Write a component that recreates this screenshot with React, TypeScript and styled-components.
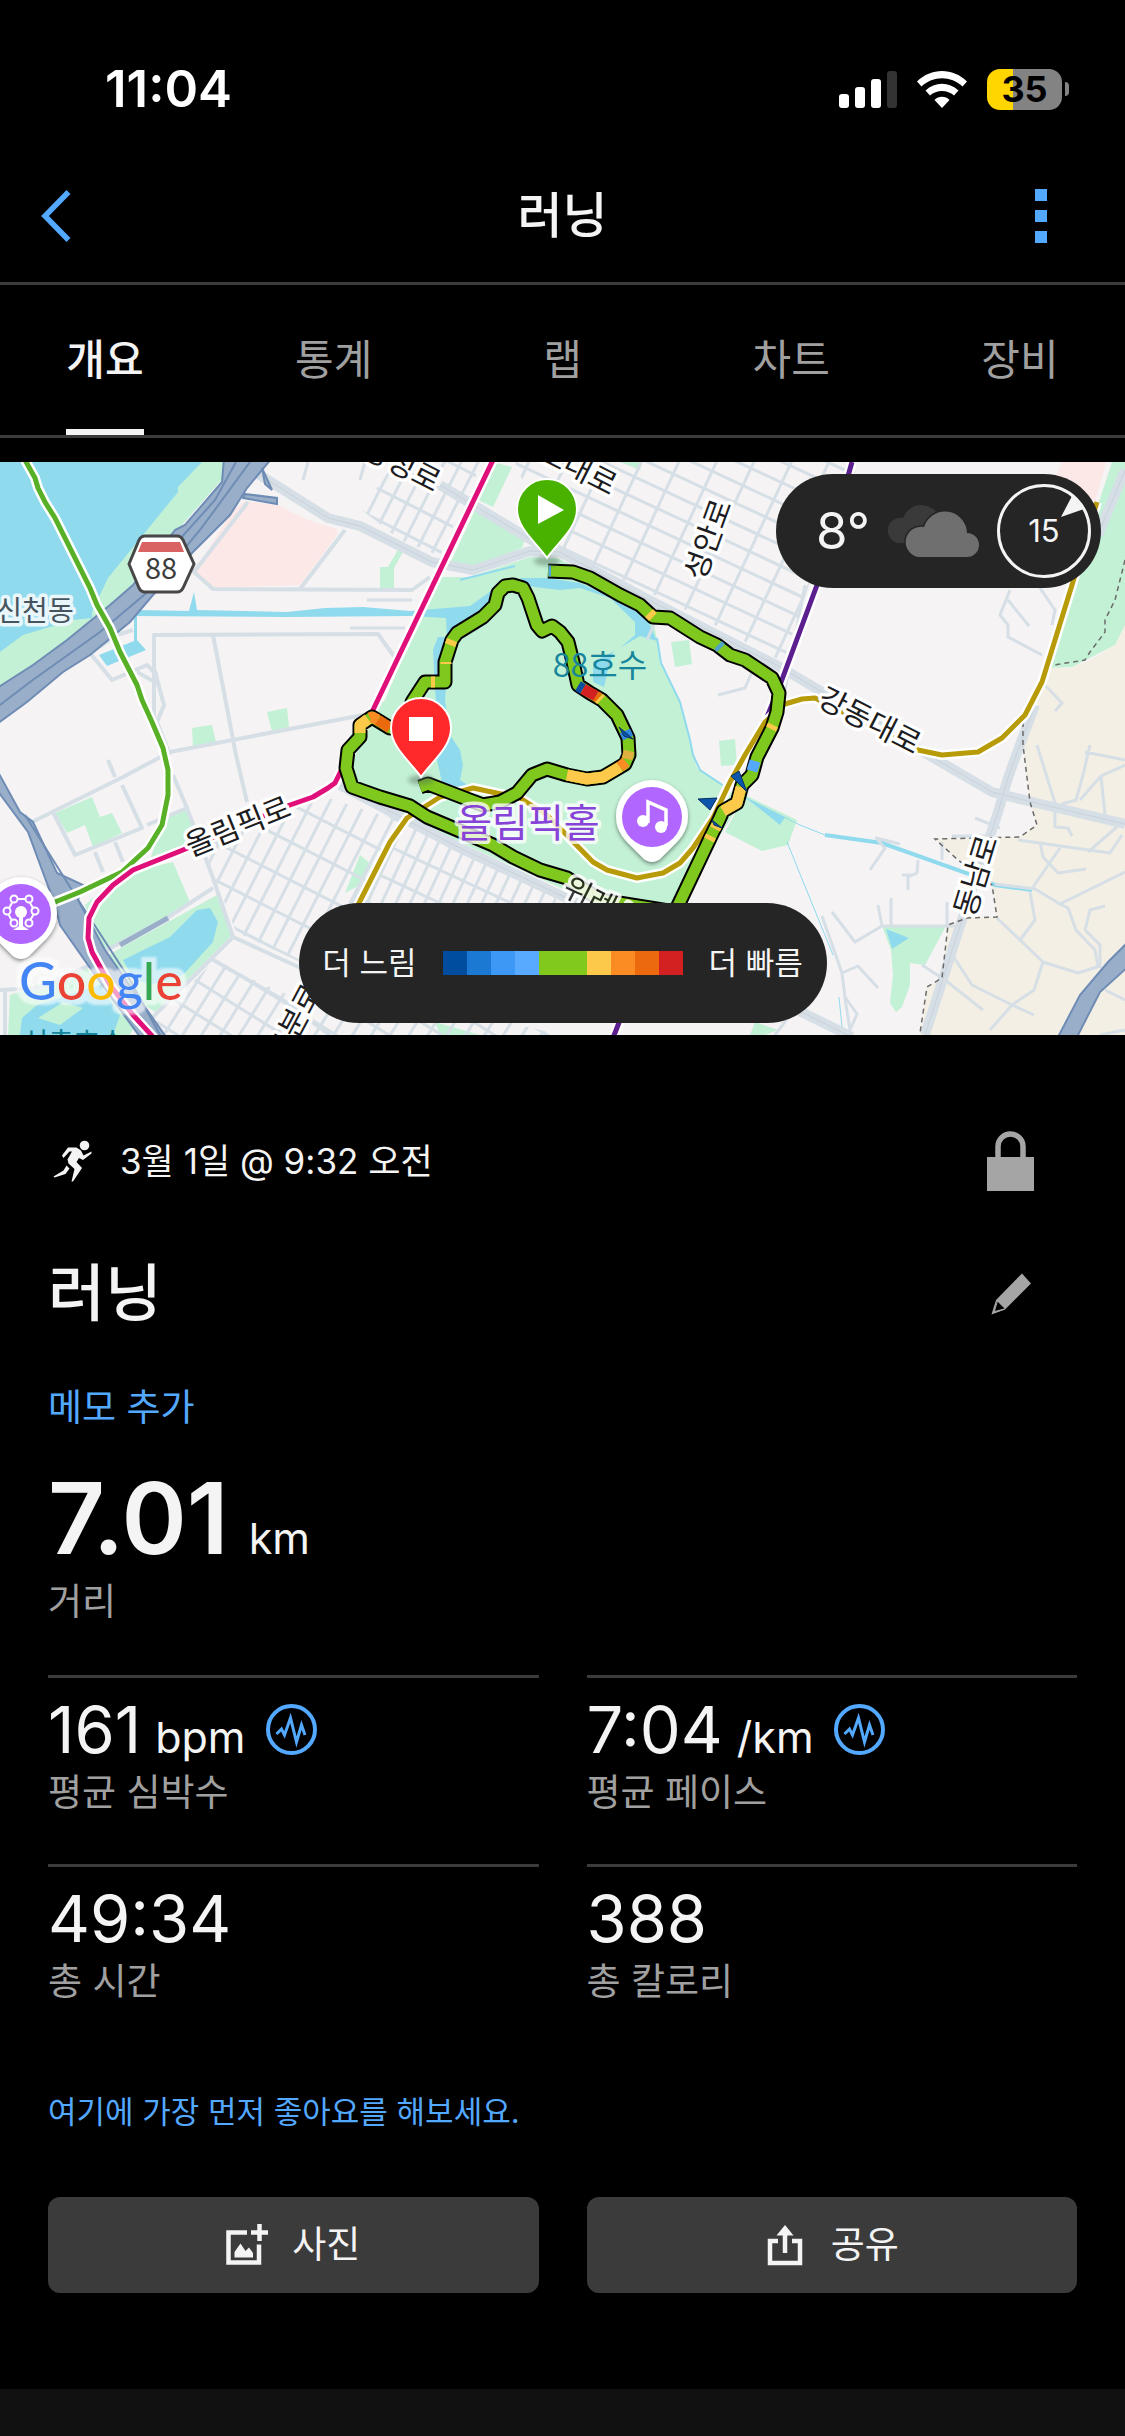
import React from 'react';
import styled, { createGlobalStyle, css } from 'styled-components';

const colors = {
  text: '#f4f4f4',
  muted: '#a0a0a0',
  accent: '#53a8ff',
  line: '#3b3b3b',
  pill: '#252525',
};

const GlobalStyle = createGlobalStyle`
  *, *::before, *::after { box-sizing: border-box; }
  html, body { margin: 0; background: #000; }
  body, button {
    font-family: Inter, 'Noto Sans CJK KR', sans-serif;
    color: ${colors.text};
  }
  button { margin: 0; padding: 0; border: 0; background: none; cursor: pointer; }
  p, h1, h2, dl, dd, dt { margin: 0; }
  svg { display: block; }
`;

/* ---------- Page shell ---------- */

const Screen = styled.div`
  display: flex;
  flex-direction: column;
  min-height: 100vh;
  background: #000;
`;

const StatusBar = styled.div`
  display: flex;
  align-items: center;
  justify-content: space-between;
  height: 149px;
  padding: 29px 56px 0 105px;
`;

const Clock = styled.time`
  font-size: 51px;
  line-height: 60px;
  font-weight: 600;
  color: #fff;
`;

const StatusIcons = styled.div`
  display: flex;
  align-items: center;
  gap: 20px;
`;

const Battery = styled.div`
  display: flex;
  align-items: center;
  gap: 3px;
`;

const BatteryBody = styled.div`
  width: 75px;
  height: 41px;
  border-radius: 13px;
  background: linear-gradient(90deg, #ffd600 35%, #838383 35%);
  color: #000;
  font-size: 36px;
  line-height: 41px;
  font-weight: 700;
  text-align: center;
`;

const BatteryTip = styled.div`
  width: 4px;
  height: 14px;
  border-radius: 0 4px 4px 0;
  background: #838383;
`;

const NavBar = styled.header`
  display: grid;
  grid-template-columns: 1fr auto 1fr;
  align-items: center;
  height: 136px;
  border-bottom: 3px solid ${colors.line};
`;

const NavButton = styled.button<{ $end?: boolean }>`
  display: flex;
  align-items: center;
  justify-content: center;
  justify-self: ${(p) => (p.$end ? 'end' : 'start')};
  width: ${(p) => (p.$end ? 168 : 112)}px;
  height: 96px;
`;

const NavTitle = styled.h1`
  font-size: 49px;
  line-height: 60px;
  font-weight: 500;
`;

const Tabs = styled.nav`
  display: flex;
  justify-content: space-between;
  height: 153px;
  padding: 0 66px;
  border-bottom: 3px solid ${colors.line};
`;

const Tab = styled.button<{ $active?: boolean }>`
  min-width: 78px;
  padding-top: 6px;
  border-bottom: 6px solid transparent;
  font-size: 42px;
  line-height: 60px;
  color: ${colors.muted};
  ${(p) =>
    p.$active &&
    css`
      color: ${colors.text};
      font-weight: 500;
      border-color: ${colors.text};
    `}
`;

/* ---------- Map ---------- */

const MapPanel = styled.section`
  position: relative;
  height: 573px;
  margin-top: 24px;
  overflow: hidden;
  background: #f5f3f4;
`;

const MapSvg = styled.svg`
  width: 100%;
  height: 100%;
`;

const WeatherPill = styled.div`
  position: absolute;
  top: 12px;
  right: 24px;
  display: flex;
  align-items: center;
  width: 325px;
  height: 114px;
  padding: 0 10px 0 40px;
  border-radius: 57px;
  background: ${colors.pill};
`;

const Temperature = styled.span`
  flex: 1;
  font-size: 51px;
  line-height: 60px;
`;

const Wind = styled.div`
  display: grid;
  place-items: center;
  margin-left: 18px;
  & > * { grid-area: 1 / 1; }
`;

const WindSpeed = styled.span`
  font-size: 31px;
  line-height: 36px;
`;

const Legend = styled.div`
  position: absolute;
  left: 50%;
  bottom: 12px;
  display: flex;
  align-items: center;
  justify-content: center;
  gap: 26px;
  width: 528px;
  height: 120px;
  border-radius: 60px;
  background: ${colors.pill};
  transform: translateX(-50%);
  font-size: 31px;
  line-height: 48px;
  white-space: nowrap;
`;

const Scale = styled.div`
  display: flex;
  width: 240px;
  height: 24px;
`;

const Swatch = styled.span<{ $color: string }>`
  flex: 1;
  background: ${(p) => p.$color};
`;

const MapLabel = styled.text<{ $size?: number; $fill?: string; $halo?: string }>`
  font-family: 'Noto Sans CJK KR', sans-serif;
  font-size: ${(p) => p.$size ?? 30}px;
  font-weight: 400;
  fill: ${(p) => p.$fill ?? '#1c1c1e'};
  stroke: ${(p) => p.$halo ?? '#fff'};
  stroke-width: 7px;
  stroke-linejoin: round;
  paint-order: stroke;
  text-anchor: middle;
`;

const GoogleText = styled.text`
  font-family: Lato, sans-serif;
  font-size: 52px;
  font-weight: 500;
`;

/* ---------- Activity details ---------- */

const Details = styled.main`
  display: flex;
  flex-direction: column;
  padding: 96px 48px;
`;

const Row = styled.div`
  display: flex;
  align-items: center;
  justify-content: space-between;
`;

const Meta = styled.p`
  display: flex;
  align-items: center;
  gap: 24px;
  padding-left: 4px;
  font-size: 35px;
  line-height: 60px;
`;

const IconButton = styled.button`
  display: flex;
  align-items: center;
  justify-content: center;
  width: 132px;
  height: 60px;
`;

const TitleRow = styled(Row)`
  margin-top: 61px;
`;

const Title = styled.h2`
  font-size: 62px;
  line-height: 84px;
  font-weight: 500;
`;

const TextLink = styled.a<{ $small?: boolean }>`
  align-self: flex-start;
  margin-top: ${(p) => (p.$small ? 82 : 48)}px;
  font-size: ${(p) => (p.$small ? 31 : 37)}px;
  line-height: 48px;
  color: ${colors.accent};
  text-decoration: none;
`;

const Distance = styled.dl`
  display: flex;
  flex-direction: column-reverse;
  margin-top: 26px;
`;

const StatGrid = styled.dl`
  display: grid;
  grid-template-columns: 1fr 1fr;
  gap: 47px 48px;
  margin-top: 49px;
`;

const Stat = styled.div`
  display: flex;
  flex-direction: column-reverse;
  padding-top: 12px;
  border-top: 3px solid ${colors.line};
`;

const StatLabel = styled.dt`
  font-size: 37px;
  line-height: 48px;
  color: ${colors.muted};
`;

const StatValue = styled.dd<{ $big?: boolean }>`
  display: flex;
  align-items: baseline;
  font-size: ${(p) => (p.$big ? 99 : 65)}px;
  line-height: ${(p) => (p.$big ? 120 : 79)}px;
  font-weight: ${(p) => (p.$big ? 600 : 400)};
`;

const Unit = styled.span<{ $wide?: boolean }>`
  margin-left: ${(p) => (p.$wide ? 20 : 14)}px;
  font-size: 43px;
  line-height: 60px;
  font-weight: 400;
`;

const ZoneButton = styled.button`
  align-self: center;
  margin-left: 20px;
`;

const Actions = styled.div`
  display: grid;
  grid-template-columns: 1fr 1fr;
  gap: 48px;
  margin-top: 61px;
`;

const ActionButton = styled.button`
  display: flex;
  align-items: center;
  justify-content: center;
  gap: 24px;
  height: 96px;
  border-radius: 12px;
  background: ${colors.line};
  font-size: 37px;
  line-height: 48px;
`;

const BottomPanel = styled.footer`
  flex: 1;
  background: #111;
`;

/* ---------- Icons ---------- */

const SignalIcon = () => (
  <svg width="58" height="37" viewBox="0 0 58 37" fill="#fff" aria-hidden="true">
    <rect x="0" y="23" width="10" height="14" rx="3" />
    <rect x="16" y="16" width="10" height="21" rx="3" />
    <rect x="32" y="8" width="10" height="29" rx="3" />
    <rect x="48" y="0" width="10" height="37" rx="3" fill="#333" />
  </svg>
);

const WifiIcon = () => (
  <svg width="50" height="37" viewBox="0 0 50 37" fill="#fff" aria-hidden="true">
    <path d="M0 10.5C14-3.5 36-3.5 50 10.5L45.500 15.500C34 4.500 16 4.500 4.500 15.500Z" />
    <path d="M8.500 19.500C18 10.500 32 10.500 41.500 19.500L37 24.500C30.500 18.500 19.500 18.500 13 24.500Z" />
    <path d="M17.500 29C21.500 24.800 28.500 24.800 32.500 29L25 37Z" />
  </svg>
);

const BackIcon = () => (
  <svg width="30" height="52" viewBox="0 0 30 52" fill="none" stroke={colors.accent} strokeWidth="5.500" aria-hidden="true">
    <path d="M27.500 2L4 26L27.500 50" />
  </svg>
);

const MoreIcon = () => (
  <svg width="12" height="54" viewBox="0 0 12 54" fill={colors.accent} aria-hidden="true">
    <path d="M0 0H12V12H0ZM0 21H12V33H0ZM0 42H12V54H0Z" />
  </svg>
);

const CloudIcon = () => (
  <svg width="94" height="52" viewBox="0 0 94 52" aria-hidden="true">
    <path d="M13 38A12.500 12.500 0 0 1 18 13C22 4 29 0 36 0C43 0 49 4 52 8V38Z" fill="#3a3a3a" />
    <path
      d="M33 52A15 15 0 1 1 39 22A22 22 0 0 1 82 28A12 12 0 0 1 82 52Z"
      fill="#6f6f6f"
      stroke={colors.pill}
      strokeWidth="3"
      paintOrder="stroke"
    />
  </svg>
);

const CompassIcon = () => (
  <svg width="94" height="94" viewBox="0 0 94 94" aria-hidden="true">
    <circle cx="47" cy="47" r="45.500" fill="none" stroke={colors.text} strokeWidth="3" />
    <path d="M75.500 11L87 25L64 33Z" fill={colors.text} />
  </svg>
);

const RunnerIcon = () => (
  <svg width="44" height="44" viewBox="0 0 44 44" aria-hidden="true">
    <circle cx="32.500" cy="6.500" r="4.800" fill={colors.text} />
    <path
      d="M11.500 19L10 16.500L16 8.500H24.500L29 11.500L31.500 16.500L39.500 12.500L39.500 14.500L31 21L27 19L24.500 23L30 29L21 42.500H19.500L22.500 30L16.500 24.500L15.500 20.500L20 12.500H17.500Z"
      fill={colors.text}
    />
    <path d="M14.500 26.500L17.500 29.500L13.500 35L2.500 38.500L1.500 37.500L11.500 31.500Z" fill={colors.text} />
  </svg>
);

const LockIcon = () => (
  <svg width="48" height="60" viewBox="0 0 48 60" aria-hidden="true">
    <path d="M0 26H47V60H0Z" fill="#a5a5a5" />
    <path d="M11 28V15.500A12.500 12.500 0 0 1 36 15.500V28" fill="none" stroke="#a5a5a5" strokeWidth="5.500" />
  </svg>
);

const PencilIcon = () => (
  <svg width="40" height="42" viewBox="0 0 40 42" aria-hidden="true">
    <path d="M31 0.500L40 10.500L14 36.500L0.500 41.500L5 27Z" fill="#a5a5a5" />
    <path d="M6 28L13.500 35.500L3.500 38Z" fill="#000" />
    <path d="M3 39.500L6.500 28M3 39.500L14 36" stroke="#a5a5a5" strokeWidth="1" />
  </svg>
);

const ZoneIcon = () => (
  <svg width="51" height="51" viewBox="0 0 51 51" fill="none" stroke={colors.accent} aria-hidden="true">
    <circle cx="25.500" cy="25.500" r="23.500" strokeWidth="4" />
    <path d="M10.500 30L15.500 25L18.500 31L24.500 14L30.500 38L35.500 21L39 31" strokeWidth="3" />
  </svg>
);

const PhotoIcon = () => (
  <svg width="42" height="42" viewBox="0 0 42 42" aria-hidden="true">
    <path d="M21 8.500H2.500V38.500H33V20.500" fill="none" stroke={colors.text} strokeWidth="4.500" />
    <path d="M8.500 33.500V28L14.500 19.500L19.500 27L23 23.500L27 29V33.500Z" fill={colors.text} />
    <path d="M33.500 0V17M25 8.500H42" stroke={colors.text} strokeWidth="4.500" />
  </svg>
);

const ShareIcon = () => (
  <svg width="42" height="42" viewBox="0 0 42 42" aria-hidden="true">
    <path d="M13 17H5V39H35V17H27" fill="none" stroke={colors.text} strokeWidth="4.500" />
    <path d="M20 29V6" stroke={colors.text} strokeWidth="4.500" />
    <path d="M11.500 11.500L20 1L28.500 11.500Z" fill={colors.text} />
  </svg>
);

/* ---------- Map drawing ---------- */

type Block = {
  id: string;
  area: string;
  center: [number, number];
  angle: number;
  stepX: number;
  stepY: number;
};

const blocks: Block[] = [
  { id: 'north', area: '515,462 850,462 783,662 690,612 560,550 548,545', center: [680, 540], angle: 25, stepX: 34, stepY: 19 },
  { id: 'northwest', area: '362,510 395,462 482,462 440,556 400,540', center: [420, 510], angle: 27, stepX: 15, stepY: 28 },
  { id: 'west', area: '200,838 328,798 372,812 400,820 352,910 300,962 236,932', center: [290, 880], angle: 27, stepX: 16, stepY: 34 },
  { id: 'south', area: '160,1015 213,962 300,1000 500,1020 560,1035 150,1035', center: [280, 1000], angle: 32, stepX: 16, stepY: 28 },
  { id: 'centre', area: '395,825 420,830 550,890 560,905 350,905', center: [440, 870], angle: 25, stepX: 13, stepY: 30 },
];

const Streets = ({ block }: { block: Block }) => {
  const [cx, cy] = block.center;
  const span = Array.from({ length: 31 }, (_, i) => i - 15);
  return (
    <g clipPath={`url(#area-${block.id})`}>
      <g transform={`translate(${cx} ${cy}) rotate(${block.angle})`} stroke="#d6dfe6" strokeWidth="3">
        {span.map((i) => (
          <path key={`v${i}`} d={`M${i * block.stepX} ${i % 2 ? -260 : -230}V${i % 3 ? 260 : 90}`} />
        ))}
        {span.map((i) => (
          <path key={`h${i}`} d={`M-260 ${i * block.stepY}H260`} />
        ))}
      </g>
    </g>
  );
};

const majorRoads = [
  'M252 470L328 518L360 526L432 562L473 570L530 551L560 552L645 598L780 667L920 750L992 792L1032 802L1125 824',
  'M340 785L460 848L560 895L700 962L852 1037',
  'M1125 470L1098 535M1035 705L1018 750L1008 778L998 812L958 932L925 1035',
  'M440 485L540 545',
];

const minorRoads = [
  'M248 502L194 572L213 589L412 590L430 577M300 589L345 530',
  'M154 735L154 635L378 634L398 662M154 668L164 705L157 722L170 755',
  'M213 635L236 755L247 802M363 715L170 752L123 777L30 823M108 760L115 777',
  'M53 812L75 855L142 828L122 785M95 852L103 872M115 842L123 862',
  'M173 775L187 808L213 878L233 937L153 1017M187 808L147 825M233 937L305 970',
  'M210 958L283 1000L330 1035M103 952L167 918L213 888',
  'M90 653L112 680L147 665L157 675M90 653L117 635L133 630M137 672L160 685',
  'M0 990L40 988L90 965M5 990V1035',
];

const lanes = [
  'M367 600H412M350 628H405M303 480L308 462M360 480L365 462',
  'M1010 590L1000 615L1008 625L1008 637L1042 655M1008 600L1029 626M1040 588L1055 610L1052 625',
  'M1044 684L1062 703L1055 711M805 585L785 690',
  'M1037 745L1055 803M1090 745L1083 775L1076 800L1062 804M1085 752L1125 760M1125 765L1101 776L1080 800M1101 776L1105 815M1055 812V827L1068 828L1072 836',
  'M1018 840L1110 853L1122 835M1088 852L1125 820M1040 842L1043 857L1058 873L1086 869M1060 848L1033 887',
  'M995 884L1035 889L1060 904L1125 872M1030 892L1035 920L1020 940M1060 904L1068 908L1076 930L1095 950L1098 966M997 918L1043 962L1078 973L1100 966',
  'M1043 962L1034 990L1012 1005L972 985L953 956M1012 1005L1034 1015M1012 1005L990 1030M945 980L983 1010M1085 930L1090 910L1105 906M1085 930L1100 945L1100 968',
  'M870 870L885 848L876 838L900 844M918 860L917 873L908 877V890M902 875H912M891 898V925M878 905L882 926H960M947 902V926M882 926L855 942L832 912',
  'M822 916L842 973L846 1005L850 1030L857 1014L845 997M842 973L858 966L878 988M922 965L942 978M975 818L1000 828M952 836H985M942 842V860',
  'M1105 990L1125 1000M1100 1035L1125 1030M775 1035L790 1015',
  'M718 695L745 688L752 672M647 640L655 622',
];

const routePath =
  'M548 571L573 572L590 578L620 595L640 605L653 617L670 618L700 637L717 645L730 655L745 660L772 678L779 693L777 712L772 728L757 757L752 775L742 785L737 803L723 811L719 820L713 832L675 912L600 900L567 878L540 870L513 857L493 845L427 817L410 806L380 797L363 791L352 787L346 768L348 750L360 737L360 725L372 717L390 728L410 728L412 702L425 682L445 682L445 662L452 640L457 633L483 617L495 605L498 593L505 586L513 585L523 588L528 598L537 625L542 631L552 626L560 632L568 642L573 662L578 685L590 693L602 700L617 715L628 738L629 755L625 764L603 777L587 779L567 775L547 769L532 775L517 793L500 802L483 805L467 799L428 784L420 787';

const paceSegments: { d: string; color: string }[] = [
  { d: 'M548.500 571L551 571', color: '#4fa3e0' },
  { d: 'M649 613L653 617', color: '#fcc94a' },
  { d: 'M718 645L721 648', color: '#4fa3c8' },
  { d: 'M773 725L771 729', color: '#fcc94a' },
  { d: 'M755 761L752 771', color: '#55a8ff' },
  { d: 'M741 787L737 803L723 811', color: '#fcc94a' },
  { d: 'M717 825L715 829M711 836L709 840', color: '#fcc94a' },
  { d: 'M360 733L360 725L368 719', color: '#fcc94a' },
  { d: 'M370 718L372 717L378 720', color: '#fb8c24' },
  { d: 'M378 720L390 728', color: '#ec690d' },
  { d: 'M450 645L452 640M446 664L446 662M431 682L435 682', color: '#fcc94a' },
  { d: 'M578 686L583 689', color: '#0b4ea2' },
  { d: 'M583 689L596 696', color: '#d32121' },
  { d: 'M596 696L599 698', color: '#ec690d' },
  { d: 'M599 698L601 700', color: '#fcc94a' },
  { d: 'M625 731L628 738', color: '#2f86e0' },
  { d: 'M629 751L627 759', color: '#e0b040' },
  { d: 'M567 775L587 779L603 777L620 767', color: '#fcc94a' },
  { d: 'M620 767L626 762', color: '#fb8c24' },
];

const Pin = ({ x, y, color, children }: { x: number; y: number; color: string; children: React.ReactNode }) => (
  <g transform={`translate(${x} ${y})`}>
    <ellipse cx="0" cy="52" rx="13" ry="5" fill="#54705f" opacity="0.45" filter="url(#soft)" />
    <path d="M0 49C-10 34-30 20-30 0A30 30 0 0 1 30 0C30 20 10 34 0 49Z" fill={color} stroke="#fff" strokeWidth="2" />
    {children}
  </g>
);

const PlacePin = ({ x, y, children }: { x: number; y: number; children: React.ReactNode }) => (
  <g transform={`translate(${x} ${y})`}>
    <path
      d="M-25 25A36 36 0 1 1 25 25L8 42Q0 48-8 42Z"
      fill="#fff"
      filter="url(#pin-shadow)"
    />
    <circle r="30" fill="#b066ff" />
    {children}
  </g>
);

const SubwayLine = ({ d, color }: { d: string; color: string }) => (
  <>
    <path d={d} stroke="#fff" strokeWidth="10" />
    <path d={d} stroke={color} strokeWidth="5" />
  </>
);

const RouteMap = () => (
  <MapSvg viewBox="0 462 1125 573" preserveAspectRatio="xMidYMid slice" role="img" aria-label="러닝 경로 지도">
    <defs>
      {blocks.map((b) => (
        <clipPath key={b.id} id={`area-${b.id}`}>
          <polygon points={b.area} />
        </clipPath>
      ))}
      <filter id="pin-shadow" x="-30%" y="-30%" width="160%" height="160%">
        <feDropShadow dx="0" dy="2" stdDeviation="2" floodOpacity="0.45" />
      </filter>
      <filter id="soft" x="-50%" y="-100%" width="200%" height="300%">
        <feGaussianBlur stdDeviation="2" />
      </filter>
      <filter id="halo" x="-10%" y="-20%" width="120%" height="140%">
        <feMorphology in="SourceAlpha" operator="dilate" radius="5" result="grown" />
        <feGaussianBlur in="grown" stdDeviation="1" result="edge" />
        <feFlood floodColor="#fff" floodOpacity="0.6" />
        <feComposite in2="edge" operator="in" result="glow" />
        <feMerge>
          <feMergeNode in="glow" />
          <feMergeNode in="SourceGraphic" />
        </feMerge>
      </filter>
    </defs>

    {/* Land */}
    <g fill="#f4efe4">
      <path d="M1047 668L1070 668L1090 660L1115 645L1125 625V1035H920L927 987L942 978L948 925L967 918L997 917L992 885L958 860L935 839L1020 837L1037 825L1030 802L1023 745L1035 715Z" />
    </g>
    <g fill="#fce8e6">
      <path d="M245 501L277 505L308 520L337 529V535L300 585L213 588L194 572L233 510Z" />
      <path d="M1062 462H1106L1090 520L1050 490Z" />
    </g>
    <g fill="#c3f1d6">
      <path d="M180 462H224V477L182 525L140 590L100 628L50 662L0 690V600Z" />
      <path d="M267 712L287 708L289 727L272 731ZM192 728L212 725L216 742L193 747Z" />
      <path d="M380 567H388L398 550L403 552L394 568V588H380Z" />
      <path d="M492 462L512 467L493 507L478 500ZM475 510L527 535L522 548L475 566L448 568ZM620 462H642L640 470Z" />
      <path d="M440 577L470 577L530 557L557 558L600 578L650 602L657 640L660 662L680 702L693 755L697 768L727 788L742 800L675 908L565 890L345 790L350 735L385 700L410 640Z" />
      <path d="M671 642L689 640L692 664L675 667ZM719 741L735 739L737 765L721 766Z" />
      <path d="M745 795L797 820L788 845L762 851L725 832Z" />
      <path d="M882 926H946L925 965L910 963V985L902 1007L896 1012L890 1003L893 975L891 950Z" />
      <path d="M55 813L92 797L100 817L112 813L122 833L93 847L85 825L67 833Z" />
      <path d="M165 815L187 810L193 828L183 848L150 860ZM173 862L190 902L103 955L85 905L120 875Z" />
      <path d="M108 955L217 895L232 935L155 1012L130 995ZM10 995L87 968L135 1025L130 1035H8Z" />
      <path d="M360 855L372 865L360 885L345 893ZM435 1022L480 1035H440ZM755 1022L778 1030L765 1035H750Z" />
      <path d="M1112 462H1125V625L1115 645L1072 667L1047 668L1080 560Z" />
    </g>
    <g fill="#90daee">
      <path d="M0 462H202L178 487V492L143 535L108 578L92 612V618L73 620L23 635L0 652Z" />
      <path d="M140 610L189 611L194 592L197 610L287 612L325 608L363 607L410 611L470 606L495 588L500 602L470 625L450 637L445 700L450 735L460 750L463 765L460 780L469 786L443 787L437 760L440 745L435 690L433 650L438 637H447L446 618L410 616L287 617L134 616Z" />
      <path d="M520 578L547 578L580 583L613 598L647 618L657 641L640 636L613 652L608 670L604 687L593 682L593 662L620 648L635 635L635 622L610 598L580 588L560 590L527 586Z" />
      <path d="M99 655L134 641V615H137V640L146 650L107 666Z" />
      <path d="M123 960L170 937L197 910L210 908L218 922L213 942L183 975L150 985L133 978Z" />
      <path d="M22 1018L37 1005L100 985L120 1015L113 1035H20Z" />
      <path d="M886 929L909 938L892 949ZM745 797L785 817L780 825Z" />
    </g>
    <path d="M38 1018L63 1002L83 1008L60 1025Z" fill="#c3f1d6" />
    <g fill="none" stroke="#90daee">
      <path d="M657 638L661 663L680 702L690 740L693 755L700 770L727 788" strokeWidth="2" />
      <path d="M745 798L800 825L825 835" strokeWidth="1" />
      <path d="M825 835L882 843L972 875L995 885L1032 890" strokeWidth="4" />
      <path d="M787 842L833 955M839 997L842 1027" strokeWidth="1" />
      <path d="M460 580L515 566" strokeWidth="2" />
    </g>

    {/* Streets */}
    {blocks.map((b) => (
      <Streets key={b.id} block={b} />
    ))}
    <g fill="none" stroke="#d6dfe6" strokeLinejoin="round">
      {lanes.map((d) => (
        <path key={d} d={d} strokeWidth="3" />
      ))}
      {minorRoads.map((d) => (
        <path key={d} d={d} strokeWidth="4" />
      ))}
      {majorRoads.map((d) => (
        <path key={d} d={d} strokeWidth="10" />
      ))}
      {majorRoads.map((d) => (
        <path key={d} d={d} strokeWidth="1" stroke="#c9d2da" />
      ))}
    </g>

    {/* Expressways */}
    <g fill="#98aec9" stroke="#6f8cb5" strokeWidth="2">
      <path d="M224 458L222 482L185 525L175 530L133 585L110 605L67 640L33 665L-3 688V724L27 702L63 672L90 655L130 622L153 595L193 552L230 515L247 488L272 458Z" />
      <path d="M-3 770L20 812L33 822L57 873L83 885L78 900L105 950L166 1037H140L95 975L60 925L55 905L28 832L-3 790Z" />
      <path d="M245 494L277 498V504L243 498ZM262 468L272 490L265 484Z" />
      <path d="M1130 940L1108 962L1080 995L1058 1037H1077L1100 992L1130 965Z" />
    </g>
    <g fill="none" stroke="#6f8cb5" strokeWidth="2">
      <path d="M250 462L200 530L150 590L100 632L30 682L0 705M236 462L215 500L170 550M25 815L75 895L130 980L160 1035" />
    </g>
    <path d="M120 945L168 918" stroke="#98aec9" strokeWidth="5" />

    {/* District boundary */}
    <path
      d="M1125 560L1115 600L1105 620V632L1090 652L1085 660L1048 666M1023 722L1023 745L1030 802L1037 825L1020 837L935 839L958 860L992 885L997 917L967 918L948 925L942 978L927 987L920 1033"
      fill="none"
      stroke="#6b6b6b"
      strokeWidth="1.500"
      strokeDasharray="5 4"
    />

    {/* Subway lines */}
    <g fill="none" strokeLinejoin="round">
      <SubwayLine
        color="#58b026"
        d="M25 460L35 478L38 488L45 502L55 518L90 588L97 605L110 628L120 652L137 685L142 700L152 722L163 748L168 770V795L162 825L148 848L122 872L80 892L50 904"
      />
      <SubwayLine
        color="#e0107a"
        d="M493 460L372 712L340 773L335 783L328 788L313 797L290 805L183 850L133 870L113 885L97 902L89 918L88 938L92 952L110 985L133 1015L154 1038"
      />
      <SubwayLine color="#5b1f8f" d="M852 462L817 585L780 685L765 722M620 1020L613 1038" />
      <SubwayLine
        color="#b89b08"
        d="M1097 502L1072 585L1042 682L1025 715L1002 738L978 752L942 755L918 750L815 698L802 699L785 704L765 722L745 755L730 782L713 818L693 848L680 863L663 873L637 878L607 870L593 862L547 815L520 798L473 788L440 797L407 818L390 842L358 905L310 1000L285 1038"
      />
    </g>

    {/* Road names */}
    <MapLabel transform="translate(397 474) rotate(27)">풍성로</MapLabel>
    <MapLabel transform="translate(561 471) rotate(27)">천호대로</MapLabel>
    <MapLabel transform="translate(718 543) rotate(-70)">성안로</MapLabel>
    <MapLabel transform="translate(865 730) rotate(27)">강동대로</MapLabel>
    <MapLabel transform="translate(986 879) rotate(-73)">동남로</MapLabel>
    <MapLabel transform="translate(242 836) rotate(-22)">올림픽로</MapLabel>
    <MapLabel transform="translate(290 1052) rotate(-62)">백제고분로</MapLabel>

    {/* Run */}
    <g fill="none" strokeLinejoin="round">
      <path d={routePath} stroke="#000" strokeWidth="15" />
      <path d={routePath} stroke="#7fc81d" strokeWidth="11" />
      {paceSegments.map((s) => (
        <path key={s.d} d={s.d} stroke={s.color} strokeWidth="11" />
      ))}
    </g>
    <g fill="#0b55ad" stroke="#08305f" strokeWidth="1">
      <path d="M698 799L717 798L710 810Z" />
      <path d="M739 771L747 792L731 776Z" />
      <path d="M619 727L633 739L624 736Z" />
      <path d="M712 820L722 828L714 825Z" />
    </g>
    <MapLabel transform="translate(622 926) rotate(27)" opacity="0.85">위례성대로</MapLabel>

    {/* Places */}
    <MapLabel x="600" y="677" $size={32} $fill="#17859b" $halo="none">
      88호수
    </MapLabel>
    <MapLabel x="35" y="621" $size={28} $fill="#46545e" $halo="#e9f6fa">
      신천동
    </MapLabel>
    <MapLabel x="74" y="1053" $size={28} $fill="#17859b" $halo="none">
      석촌호수
    </MapLabel>
    <MapLabel x="528" y="837" $size={39} $fill="#8743d8" $halo="rgba(255,255,255,0.8)">
      올림픽홀
    </MapLabel>

    <g transform="translate(161 564)">
      <path d="M-32 0L-22-24Q-20-28-16-28H16Q20-28 22-24L33 0L22 24Q20 28 16 28H-16Q-20 28-22 24Z" fill="#fff" stroke="#474747" strokeWidth="3" />
      <path d="M-19-22H19L23-12H-23Z" fill="#d96262" />
      <MapLabel y="15" $size={29} $fill="#3c3c3c" $halo="none">
        88
      </MapLabel>
    </g>

    <Pin x={547} y={509} color="#49b200">
      <path d="M-9-14L17 1L-9 15Z" fill="#fff" />
    </Pin>
    <Pin x={421} y={728} color="#ff282b">
      <path d="M-12-11H12V13H-12Z" fill="#fff" />
    </Pin>
    <PlacePin x={652} y={817}>
      <path d="M-4 6V-15L14-7V9" fill="none" stroke="#fff" strokeWidth="3.500" />
      <circle cx="-9" cy="4" r="6" fill="#fff" />
      <circle cx="9" cy="10" r="6" fill="#fff" />
    </PlacePin>
    <PlacePin x={21} y={914}>
      <g fill="none" stroke="#fff" strokeWidth="2">
        <path d="M-7-15L7-15L14-2L7 10M-7-15L-14-2L-7 10" />
        <g fill="#b066ff">
          <circle cx="-7" cy="-15" r="3.500" />
          <circle cx="8" cy="-15" r="3.500" />
          <circle cx="14" cy="-3" r="3.500" />
          <circle cx="-14" cy="-3" r="3.500" />
          <circle cx="-7" cy="9" r="3.500" />
          <circle cx="8" cy="9" r="3.500" />
        </g>
      </g>
      <circle cy="-2" r="6" fill="#fff" />
      <path d="M-2 0H2V12L8 16H-8L-2 12Z" fill="#fff" />
    </PlacePin>

    <GoogleText x="19" y="1000" filter="url(#halo)">
      <tspan fill="#4285f4">G</tspan>
      <tspan fill="#ea4335">o</tspan>
      <tspan fill="#fbbc05">o</tspan>
      <tspan fill="#4285f4">g</tspan>
      <tspan fill="#34a853">l</tspan>
      <tspan fill="#ea4335">e</tspan>
    </GoogleText>
  </MapSvg>
);

/* ---------- Data ---------- */

const tabs = ['개요', '통계', '랩', '차트', '장비'];

const scaleColors = [
  '#004c9e', '#1b78d3', '#3d97f5', '#57aaff', '#81c91d',
  '#81c91d', '#fcc94a', '#fb8c24', '#ec690d', '#d32121',
];

const stats = [
  { label: '평균 심박수', value: '161', unit: 'bpm' },
  { label: '평균 페이스', value: '7:04', unit: '/km' },
  { label: '총 시간', value: '49:34' },
  { label: '총 칼로리', value: '388' },
];

export default function App() {
  return (
    <Screen>
      <GlobalStyle />
      <StatusBar>
        <Clock>11:04</Clock>
        <StatusIcons>
          <SignalIcon />
          <WifiIcon />
          <Battery>
            <BatteryBody>35</BatteryBody>
            <BatteryTip />
          </Battery>
        </StatusIcons>
      </StatusBar>

      <NavBar>
        <NavButton aria-label="뒤로">
          <BackIcon />
        </NavButton>
        <NavTitle>러닝</NavTitle>
        <NavButton $end aria-label="더 보기">
          <MoreIcon />
        </NavButton>
      </NavBar>

      <Tabs>
        {tabs.map((tab, i) => (
          <Tab key={tab} $active={i === 0} aria-current={i === 0 ? 'page' : undefined}>
            {tab}
          </Tab>
        ))}
      </Tabs>

      <MapPanel>
        <RouteMap />
        <WeatherPill>
          <Temperature>8°</Temperature>
          <CloudIcon />
          <Wind>
            <CompassIcon />
            <WindSpeed>15</WindSpeed>
          </Wind>
        </WeatherPill>
        <Legend>
          <span>더 느림</span>
          <Scale>
            {scaleColors.map((c, i) => (
              <Swatch key={i} $color={c} />
            ))}
          </Scale>
          <span>더 빠름</span>
        </Legend>
      </MapPanel>

      <Details>
        <Row>
          <Meta>
            <RunnerIcon />
            <span>3월 1일 @ 9:32 오전</span>
          </Meta>
          <IconButton aria-label="비공개">
            <LockIcon />
          </IconButton>
        </Row>
        <TitleRow>
          <Title>러닝</Title>
          <IconButton aria-label="제목 편집">
            <PencilIcon />
          </IconButton>
        </TitleRow>
        <TextLink href="#memo">메모 추가</TextLink>

        <Distance>
          <StatLabel>거리</StatLabel>
          <StatValue $big>
            7.01<Unit $wide>km</Unit>
          </StatValue>
        </Distance>

        <StatGrid>
          {stats.map((s) => (
            <Stat key={s.label}>
              <StatLabel>{s.label}</StatLabel>
              <StatValue>
                {s.value}
                {s.unit && (
                  <>
                    <Unit>{s.unit}</Unit>
                    <ZoneButton aria-label={`${s.label} 범위`}>
                      <ZoneIcon />
                    </ZoneButton>
                  </>
                )}
              </StatValue>
            </Stat>
          ))}
        </StatGrid>

        <TextLink $small href="#like">
          여기에 가장 먼저 좋아요를 해보세요.
        </TextLink>

        <Actions>
          <ActionButton>
            <PhotoIcon />
            사진
          </ActionButton>
          <ActionButton>
            <ShareIcon />
            공유
          </ActionButton>
        </Actions>
      </Details>
      <BottomPanel />
    </Screen>
  );
}
